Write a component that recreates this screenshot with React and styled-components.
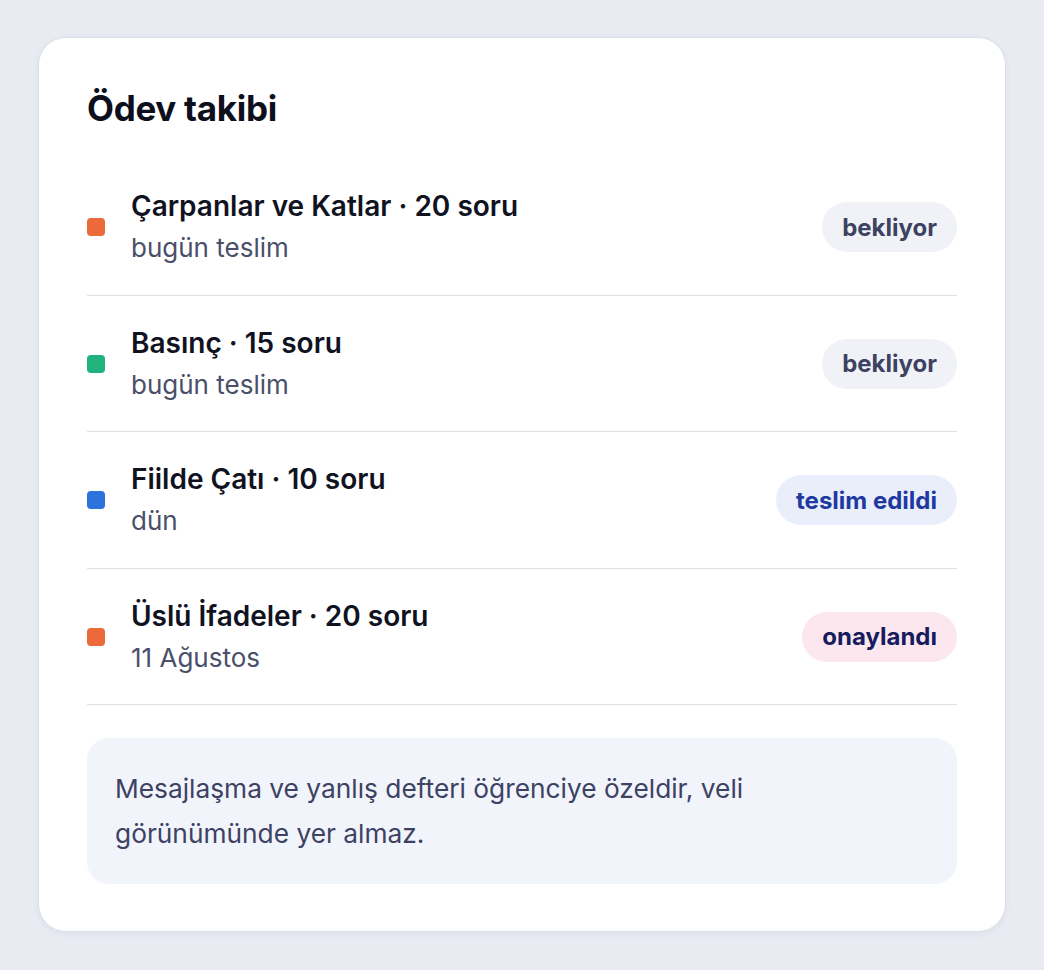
import styled, { createGlobalStyle } from 'styled-components';

const GlobalStyle = createGlobalStyle`
  html, body {
    margin: 0;
    padding: 0;
    background: #e9ebf3;
    font-family: Inter, "Noto Sans", sans-serif;
  }
`;

const Page = styled.div`
  padding: 37px 38px 38px;
`;

const Card = styled.div`
  background: #ffffff;
  border: 1px solid #dcdfe9;
  border-radius: 28px;
  box-shadow: 0 2px 6px rgba(30, 40, 80, 0.06);
  padding: 49px 48px 47px;
`;

const Title = styled.h2`
  margin: 0 0 30px;
  font-size: 35px;
  line-height: 42px;
  font-weight: 700;
  color: #0d0f1c;
  letter-spacing: -0.3px;
`;

const List = styled.div`
  display: flex;
  flex-direction: column;
`;

const Row = styled.div`
  display: flex;
  align-items: center;
  padding: 30px 0 29.5px;
  border-bottom: 1px solid #dfe1ea;
`;

const Dot = styled.span`
  width: 18px;
  height: 18px;
  border-radius: 4px;
  background: ${(p) => p.$color};
  flex-shrink: 0;
  margin-right: 26px;
`;

const Info = styled.div`
  flex: 1;
  display: flex;
  flex-direction: column;
  gap: 8px;
`;

const RowTitle = styled.div`
  font-size: 28px;
  line-height: 34px;
  font-weight: 600;
  color: #10131f;
`;

const RowSub = styled.div`
  font-size: 26px;
  line-height: 34px;
  color: #4a4f6a;
`;

const badgeColors = {
  wait: { bg: '#f1f2f8', fg: '#3d4263' },
  done: { bg: '#eaeefb', fg: '#1e3aa0' },
  ok: { bg: '#fde7ee', fg: '#161d5e' },
};

const Badge = styled.span`
  display: inline-flex;
  align-items: center;
  height: 50px;
  padding: 0 20px;
  border-radius: 25px;
  font-size: 24px;
  font-weight: 700;
  background: ${(p) => badgeColors[p.$kind].bg};
  color: ${(p) => badgeColors[p.$kind].fg};
`;

const Note = styled.div`
  margin-top: 33px;
  background: #f2f4fb;
  border-radius: 22px;
  padding: 28px 56px 28px 28px;
  font-size: 26.3px;
  line-height: 45px;
  color: #3d4263;
`;

const items = [
  { color: '#ea6a3a', title: 'Çarpanlar ve Katlar · 20 soru', sub: 'bugün teslim', badge: 'bekliyor', kind: 'wait' },
  { color: '#1fb37e', title: 'Basınç · 15 soru', sub: 'bugün teslim', badge: 'bekliyor', kind: 'wait' },
  { color: '#2b73d9', title: 'Fiilde Çatı · 10 soru', sub: 'dün', badge: 'teslim edildi', kind: 'done' },
  { color: '#ea6a3a', title: 'Üslü İfadeler · 20 soru', sub: '11 Ağustos', badge: 'onaylandı', kind: 'ok' },
];

export default function App() {
  return (
    <Page>
      <GlobalStyle />
      <Card>
        <Title>Ödev takibi</Title>
        <List>
          {items.map((it) => (
            <Row key={it.title}>
              <Dot $color={it.color} />
              <Info>
                <RowTitle>{it.title}</RowTitle>
                <RowSub>{it.sub}</RowSub>
              </Info>
              <Badge $kind={it.kind}>{it.badge}</Badge>
            </Row>
          ))}
        </List>
        <Note>Mesajlaşma ve yanlış defteri öğrenciye özeldir, veli görünümünde yer almaz.</Note>
      </Card>
    </Page>
  );
}
